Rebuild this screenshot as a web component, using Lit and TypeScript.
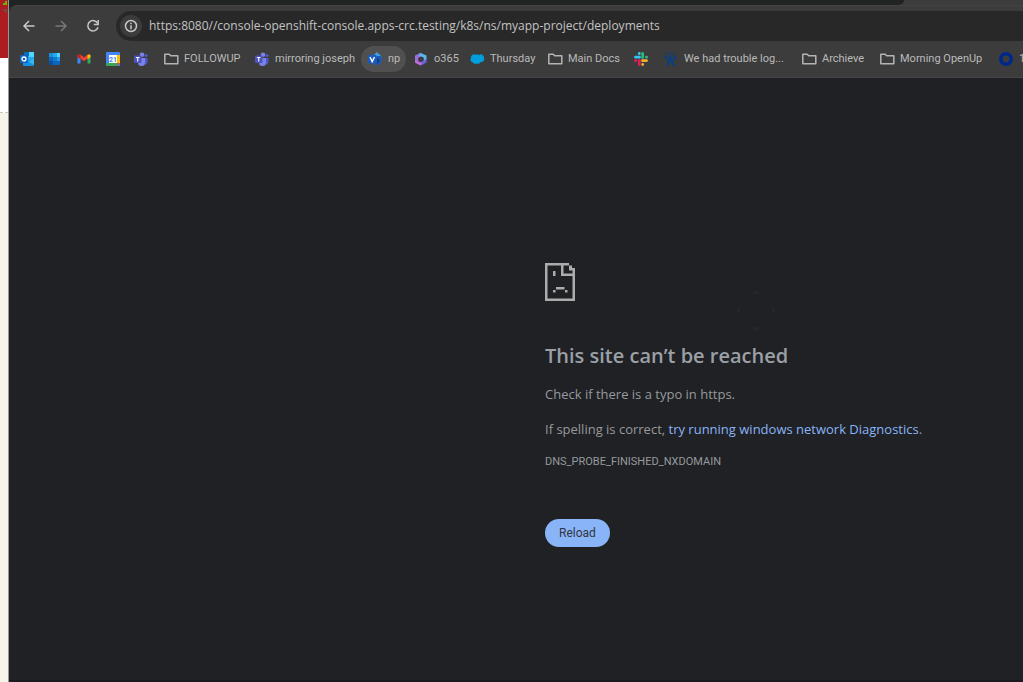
import { LitElement, html, css, svg, nothing } from "lit";
import { customElement, property } from "lit/decorators.js";

const ICONS: Record<string, unknown> = {
  outlook: svg`<rect x="4" y="0" width="10" height="9" fill="#28a8ea"/><rect x="9" y="0" width="5" height="5" fill="#50d9ff"/><rect x="4" y="0" width="5" height="4" fill="#0a6dc2"/><path d="M3 8h11v5a1 1 0 0 1-1 1H4a1 1 0 0 1-1-1z" fill="#1490df"/><path d="M14 7v6L8 9.500z" fill="#35b8f1"/><rect x="0" y="3" width="8" height="8" rx="1" fill="#0f63bd"/><circle cx="4" cy="7" r="2" fill="none" stroke="#fff" stroke-width="1.300"/>`,
  tiles: svg`<rect x="1" y="1" width="11" height="12" rx="1" fill="#0c66c0"/><rect x="1" y="1" width="4" height="4" fill="#1490df"/><rect x="5" y="1" width="4" height="4" fill="#28a8ea"/><rect x="9" y="1" width="3" height="4" fill="#50d9ff"/><rect x="5" y="5" width="4" height="4" fill="#1378d0"/><rect x="9" y="5" width="3" height="4" fill="#1f9ae5"/><rect x="1" y="9" width="4" height="4" fill="#0a4f9e"/>`,
  gmail: svg`<path d="M0.500 3v8.500h3V7z" fill="#4285f4"/><path d="M13.500 3v8.500h-3V7z" fill="#34a853"/><path d="M2 3.500 7 7.300l5-3.800" fill="none" stroke="#ea4335" stroke-width="3"/><path d="M10.500 3.200 12 2.200q1.500 0 1.500 1.500V5l-3 2.300z" fill="#fbbc04"/><path d="M3.500 3.200 2 2.200Q.5 2.200.5 3.700V5l3 2.300z" fill="#c5221f"/>`,
  calendar: svg`<rect width="14" height="14" rx="1" fill="#4285f4"/><path d="M11 3h3v8h-3z" fill="#fbbc04"/><path d="M0 11h11v3H1a1 1 0 0 1-1-1z" fill="#34a853"/><path d="M11 11h3l-3 3z" fill="#ea4335"/><rect x="3" y="3" width="8" height="8" fill="#fff"/><text x="7" y="9.800" text-anchor="middle" font-size="7" font-weight="700" fill="#4285f4">21</text>`,
  teams: svg`<circle cx="8" cy="2.800" r="2.300" fill="#7b83eb"/><circle cx="12" cy="3.500" r="1.600" fill="#5059c9"/><path d="M9 6h4.500v4a2.500 2.500 0 0 1-4 2z" fill="#5059c9"/><path d="M4 6h7v4.500a3.500 3.500 0 0 1-7 0z" fill="#7b83eb"/><rect y="3.500" width="7.500" height="7.500" rx="1" fill="#4b53bc"/><path d="M2 5.500h3.500M3.750 5.500v4" stroke="#fff" stroke-width="1.100"/>`,
  folder: svg`<path d="M.8 2.200h4.400l1.500 1.600h7.100v8H.8z" fill="none" stroke="#b4b4b4" stroke-width="1.500" stroke-linejoin="round"/>`,
  visio: svg`<path d="M9 0 14 5 9 10 4 5z" fill="#3aa0e8"/><path d="M9 4h4.500v6L9 14 5 10z" fill="#1b5bb8"/><path d="m9 5 3 3.500L9 13z" fill="#123f86"/><rect y="3" width="8.500" height="8.500" rx="1" fill="#185abd"/><path d="m2 5 2.200 4.600L6.500 5" fill="none" stroke="#fff" stroke-width="1.400"/>`,
  m365: svg`<path d="M6 1 1 3.500v7L4.500 11V6L9 4z" fill="#9b6be0"/><path d="m6 .8 6.500 2.700V8L9.500 9V5.500L5 4z" fill="#58b7ee"/><path d="M12.500 7v3.500L7 13.500 1.800 11l1-2L7 10z" fill="#6f62dc"/><path d="M1 8v2.500l5.500 3L8 10.800 4.500 10z" fill="#c86bd8"/><path d="m7 4.500 2.500 1.200v2.600L7 9.500 4.500 8.300V5.700z" fill="#3c3c3c"/>`,
  cloud: svg`<path d="M3 10.500A2.800 2.800 0 0 1 1 6a3 3 0 0 1 4.500-3.200A3 3 0 0 1 9 3.200a3 3 0 0 1 5 2.600A3 3 0 0 1 10.500 10a2.800 2.800 0 0 1-4 1.500A2.600 2.600 0 0 1 3 10.500z" fill="#009edb"/>`,
  slack: svg`<g fill="none" stroke-width="2.800" stroke-linecap="round"><path d="M1.500 5.200h4M5.300 1.500v.2" stroke="#36c5f0"/><path d="M8.700 1.500v4M12.400 5.200h.2" stroke="#2eb67d"/><path d="M12.500 8.700h-4M8.700 12.400v.2" stroke="#ecb22e"/><path d="M5.300 12.500v-4M1.500 8.700h.2" stroke="#e01e5a"/></g>`,
  jira: svg`<g fill="none" stroke="#0c3f7c" stroke-width="2.400"><path d="M1.300 4Q2.500 8 6.500 8t5.200-4"/><path d="M3 14Q3.500 11 6.500 8.500q3 2.500 3.500 5.500"/></g><g fill="#0c3f7c"><circle cx="6.500" cy="4.700" r="1.700"/><circle cx="2.500" cy="2" r="1"/><circle cx="5.100" cy=".9" r=".9"/><circle cx="7.900" cy=".9" r=".9"/><circle cx="10.500" cy="2" r="1"/></g>`,
  ring: svg`<circle cx="7" cy="7" r="5.200" fill="none" stroke="#00288c" stroke-width="3.600"/>`,
};

interface Bookmark { icon: string; label?: string; name: string; active?: boolean; }

const BOOKMARKS: Bookmark[] = [
  { icon: "outlook", name: "Outlook" },
  { icon: "tiles", name: "Office" },
  { icon: "gmail", name: "Gmail" },
  { icon: "calendar", name: "Calendar" },
  { icon: "teams", name: "Teams" },
  { icon: "folder", name: "FOLLOWUP", label: "FOLLOWUP" },
  { icon: "teams", name: "mirroring joseph", label: "mirroring joseph" },
  { icon: "visio", name: "np", label: "np", active: true },
  { icon: "m365", name: "o365", label: "o365" },
  { icon: "cloud", name: "Thursday", label: "Thursday" },
  { icon: "folder", name: "Main Docs", label: "Main Docs" },
  { icon: "slack", name: "Slack" },
  { icon: "jira", name: "We had trouble log...", label: "We had trouble log..." },
  { icon: "folder", name: "Archieve", label: "Archieve" },
  { icon: "folder", name: "Morning OpenUp", label: "Morning OpenUp" },
  { icon: "ring", name: "1", label: "1" },
];

@customElement("bookmark-link")
export class BookmarkLink extends LitElement {
  @property({ attribute: false }) item!: Bookmark;

  static styles = css`
    :host { display: block; }
    .link {
      display: inline-flex; align-items: center; gap: 6px; height: 26px;
      padding: 0 7px; border-radius: 13px; color: #bababa; text-decoration: none;
      font: 11px/16px Roboto, "Open Sans", sans-serif; white-space: nowrap;
    }
    .active { background: #505050; padding: 0 6px 0 7px; }
    .icon { width: 14px; height: 14px; flex: none; overflow: visible; }
  `;

  render() {
    const { icon, label, name, active } = this.item;
    return html`<a class="link ${active ? "active" : ""}" href="#" aria-label=${name}>
      <svg class="icon" viewBox="0 0 14 14" aria-hidden="true">${ICONS[icon]}</svg>${label ? html`<span>${label}</span>` : nothing}</a>`;
  }
}

@customElement("browser-toolbar")
export class BrowserToolbar extends LitElement {
  static styles = css`
    :host { display: block; background: #1f2322; }
    .tabs { display: grid; grid-template-columns: 895fr 119fr; height: 5px; background: #3c3c3c; }
    .tabstrip { background: #1f2322; border-radius: 0 0 6px 0; }
    .bar { background: #3c3c3c; border-top: 1px solid #434343; border-bottom: 1px solid #454545; border-radius: 8px 0 0 0; }
    .backing { background: #1f2322; }
    .nav { display: flex; align-items: center; padding: 5px 0 0 12px; }
    .tool {
      display: grid; place-items: center; width: 16px; height: 24px; padding: 0; border: 0;
      margin-right: 16px; background: none; color: #c7c7c7;
    }
    .tool[disabled] { color: #777; }
    .reload { margin-right: 15px; }
    .address {
      flex: 1; display: flex; align-items: center; gap: 7px; height: 30px; min-width: 0;
      padding-left: 4px; background: #282828; border-radius: 15px 0 0 15px;
    }
    .info {
      display: grid; place-items: center; width: 22px; height: 22px; padding: 0; border: 0;
      border-radius: 11px; background: #3c3c3c; color: #c7c7c7; flex: none;
    }
    .url {
      flex: 1; min-width: 0; padding: 0; border: 0; outline: 0; background: none; color: #c3c3c3;
      font: 12px/18px "Open Sans", "Noto Sans", sans-serif;
    }
    .glyph { fill: none; stroke: currentColor; stroke-width: 1.5; }
    .bookmarks {
      display: grid; align-items: center; padding: 5px 0 5px 4px; overflow: hidden;
      grid-template-columns: 28px 29px 29px 28px 30px 91px 113px 46px 56px 78px 86px 30px 138px 78px 119px 1fr;
    }
  `;

  render() {
    return html`
      <div class="tabs"><div class="tabstrip"></div></div>
      <div class="backing"><div class="bar">
        <div class="nav">
          <button class="tool" aria-label="Back"><svg class="glyph" width="14" height="14" viewBox="0 0 14 14"><path d="M12.500 7H2M7 2 2 7l5 5"/></svg></button>
          <button class="tool" disabled aria-label="Forward"><svg class="glyph" width="14" height="14" viewBox="0 0 14 14"><path d="M1.500 7H12M7 2l5 5-5 5"/></svg></button>
          <button class="tool reload" aria-label="Refresh"><svg class="glyph" width="14" height="14" viewBox="0 0 14 14"><path d="M11.700 4.500A5.200 5.200 0 1 0 12 8.200"/><path d="M12.200 1v4.500H7.800"/></svg></button>
          <div class="address">
            <button class="info" aria-label="Site information"><svg class="glyph" width="14" height="14" viewBox="0 0 14 14"><circle cx="7" cy="7" r="5.500"/><path d="M7 6.300v4M7 3.700v1.500"/></svg></button>
            <input class="url" aria-label="Address" spellcheck="false" value="https:8080//console-openshift-console.apps-crc.testing/k8s/ns/myapp-project/deployments" />
          </div>
        </div>
        <nav class="bookmarks" aria-label="Bookmarks">
          ${BOOKMARKS.map((b) => html`<bookmark-link .item=${b}></bookmark-link>`)}
        </nav>
      </div></div>`;
  }
}

@customElement("error-page")
export class ErrorPage extends LitElement {
  static styles = css`
    :host { display: grid; grid-template-columns: 536fr 478fr; align-content: start; background: #202124; color: #96999d; }
    .content { grid-column: 2; padding-top: 185px; font: 13px/20px "Open Sans", "Noto Sans", sans-serif; }
    .top { display: flex; height: 67px; }
    .sad { display: block; fill: #acacac; }
    .spinner { margin: 28px 0 0 162px; fill: #25262a; }
    h1 { margin: 11px 0 0; font-size: 20px; line-height: 30px; font-weight: 600; color: #9aa0a6; }
    p { margin: 13px 0 0; }
    .second { margin-top: 15px; }
    a { color: #8ab4f8; text-decoration: none; }
    .code { font: 11px/20px Roboto, sans-serif; }
    .retry {
      display: block; height: 28px; margin-top: 47px; padding: 0 14px; border: 0; border-radius: 14px;
      background: #8ab4f8; color: #303540; font: 12px/16px Roboto, sans-serif;
    }
  `;

  render() {
    return html`<main class="content">
      <div class="top">
        <svg class="sad" width="30" height="38" viewBox="0 0 30 38" aria-hidden="true">
          <path d="M0 0h24v2.500h3V5h3v33H0zM2.500 2.500v33h25V13H16V2.500zM18.500 2.500v8h9V7.500H24v-5z" fill-rule="evenodd"/>
          <path d="M8 8h2.500v5H8zM11 24h8.500v2.500H11zM8 27h2.500v2.500H8zM20 27h2.500v2.500H20z"/>
        </svg>
        <svg class="spinner" width="38" height="39" viewBox="0 0 38 39" aria-hidden="true">
          <path d="M16 0h6v3h-6zM16 36h6v3h-6zM0 16h3v6H0zM35 16h3v6h-3z"/>
        </svg>
      </div>
      <h1>This site can’t be reached</h1>
      <p>Check if there is a typo in https.</p>
      <p class="second">If spelling is correct, <a href="#">try running windows network Diagnostics</a>.</p>
      <p class="code">DNS_PROBE_FINISHED_NXDOMAIN</p>
      <button class="retry">Reload</button>
    </main>`;
  }
}

@customElement("app-root")
export class AppRoot extends LitElement {
  static styles = css`
    :host { display: flex; min-height: 100vh; font-family: "Open Sans", "Noto Sans", sans-serif; }
    .behind { flex: none; width: 8px; display: flex; flex-direction: column; background: #f6f3eb; border-right: 1px solid #96978f; }
    .banner { height: 58px; background: #ad1c21; }
    .banner svg { display: block; }
    .sheet { height: 54px; background: #fff; border-bottom: 1px dashed #c9c7c2; }
    .window { flex: 1; min-width: 0; display: flex; flex-direction: column; }
    error-page { flex: 1; border-bottom: 2px solid #1c1b20; }
  `;

  render() {
    return html`
      <div class="behind">
        <div class="banner"><svg width="8" height="14" viewBox="0 0 8 14" aria-hidden="true"><path d="M5 1h2v4H3V3h2z" fill="#63b506"/><path d="M3 9h4v4H5v-2H3z" fill="#6f4a4a"/></svg></div>
        <div class="sheet"></div>
      </div>
      <div class="window">
        <browser-toolbar></browser-toolbar>
        <error-page></error-page>
      </div>`;
  }
}
